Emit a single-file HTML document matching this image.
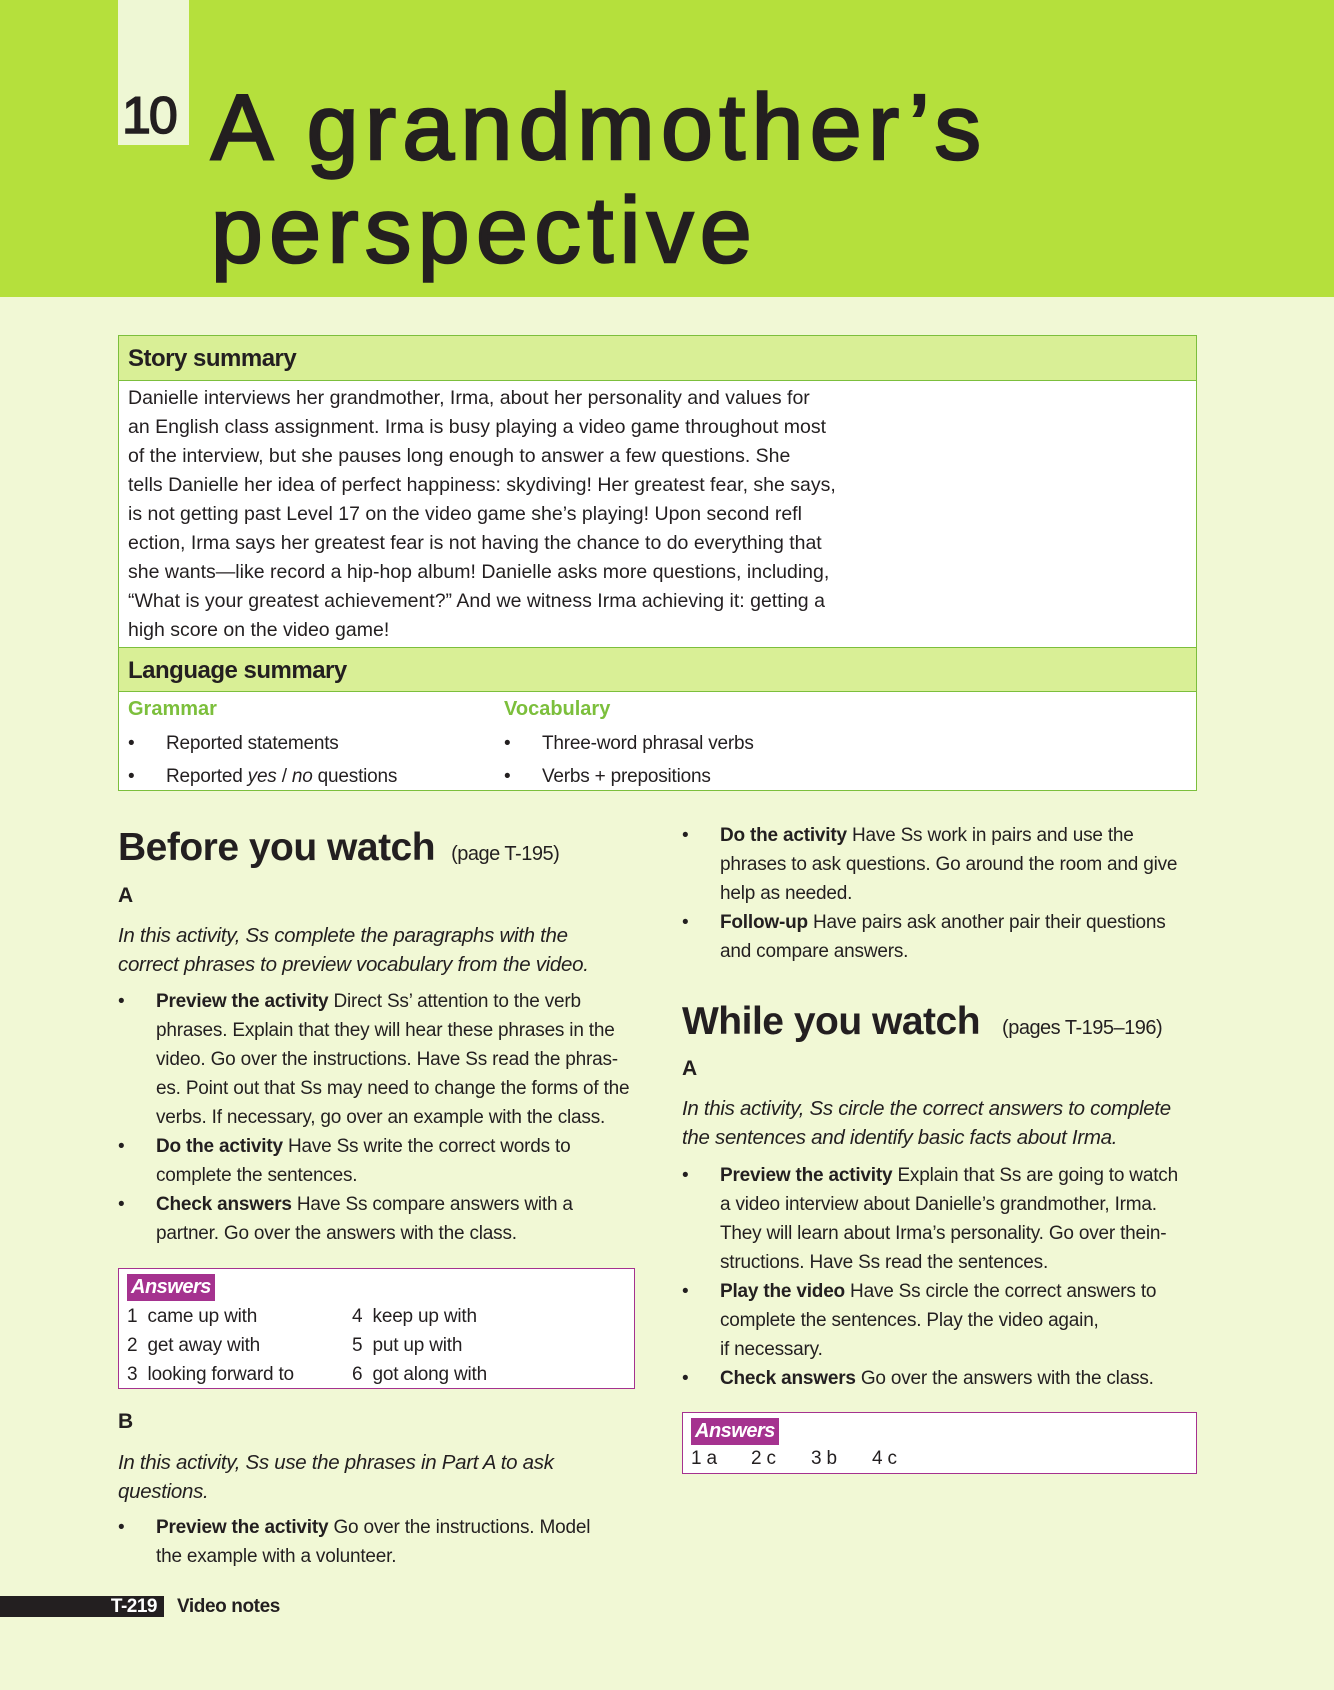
<!DOCTYPE html>
<html><head><meta charset="utf-8"><style>
*{margin:0;padding:0;box-sizing:border-box}
body{width:1334px;height:1690px;background:#f1f8d5;font-family:"Liberation Sans",sans-serif;color:#231f20;position:relative;overflow:hidden}
.hdr{position:absolute;left:0;top:0;width:1334px;height:297px;background:#b5e03c}
.num{position:absolute;left:118px;top:0;width:71px;height:145px;background:#eef7d4;font-size:52px;font-weight:normal;-webkit-text-stroke:1.5px #231f20;letter-spacing:-2px;padding:91px 0 0 4px;line-height:50px}
.title{position:absolute;left:211px;top:76px;font-size:93px;font-weight:normal;-webkit-text-stroke:2.5px #231f20;line-height:103px;letter-spacing:6.5px;white-space:nowrap}
.ab{position:absolute;white-space:nowrap}
.t{font-size:19.5px;line-height:29px;letter-spacing:0}
.tbl{position:absolute;left:118px;top:335px;width:1079px;height:456px;border:1px solid #7cbf3c;background:#fff}
.th{background:#d9ef96;height:45px;font-weight:bold;font-size:24px;padding:9px 9px;border-bottom:1px solid #7cbf3c;letter-spacing:-0.5px}
.g{color:#7cbf3c;font-weight:bold;font-size:20px}
h2{font-size:39px;font-weight:bold;letter-spacing:-0.5px}
h2 small{font-size:20px;font-weight:normal;margin-left:16px}
.A{font-weight:bold;font-size:21px}
i{font-style:italic}
.it{font-style:italic;font-size:20.5px;line-height:29px;letter-spacing:-0.3px}
.ul{font-size:19px;line-height:29px;letter-spacing:-0.2px}
.li{position:relative;padding-left:38px}
.li:before{content:"•";position:absolute;left:0;top:0}
.ans{position:absolute;border:1px solid #a5328f;background:#fff}
.lab{display:inline-block;background:#a5328f;color:#fff;font-weight:bold;font-style:italic;font-size:20px;padding:0 4px;line-height:27px;letter-spacing:-0.5px}
</style></head><body>
<div class="hdr"></div>
<div class="num">10</div>
<div class="title">A grandmother’s<br>perspective</div>

<div class="tbl">
<div class="th">Story summary</div>
<div class="t" style="padding:3px 9px;height:266px">Danielle interviews her grandmother, Irma, about her personality and values for<br>an English class assignment. Irma is busy playing a video game throughout most<br>of the interview, but she pauses long enough to answer a few questions. She<br>tells Danielle her idea of perfect happiness: skydiving! Her greatest fear, she says,<br>is not getting past Level 17 on the video game she’s playing! Upon second refl<br>ection, Irma says her greatest fear is not having the chance to do everything that<br>she wants—like record a hip-hop album! Danielle asks more questions, including,<br>“What is your greatest achievement?” And we witness Irma achieving it: getting a<br>high score on the video game!</div>
<div class="th" style="border-top:1px solid #7cbf3c">Language summary</div>
<div class="ab" style="left:9px;top:362px"><div class="g">Grammar</div><div class="ul" style="margin-top:8px"><div class="li">Reported statements</div><div class="li" style="margin-top:4px">Reported <i>yes</i> / <i>no</i> questions</div></div></div>
<div class="ab" style="left:385px;top:362px"><div class="g">Vocabulary</div><div class="ul" style="margin-top:8px"><div class="li">Three-word phrasal verbs</div><div class="li" style="margin-top:4px">Verbs + prepositions</div></div></div>
</div>

<div class="ab" style="left:118px;top:826px"><h2>Before you watch<small>(page T-195)</small></h2></div>
<div class="ab A" style="left:118px;top:884px">A</div>
<div class="ab it" style="left:118px;top:921px">In this activity, Ss complete the paragraphs with the<br>correct phrases to preview vocabulary from the video.</div>
<div class="ab ul" style="left:118px;top:987px">
<div class="li"><b>Preview the activity</b> Direct Ss’ attention to the verb<br>phrases. Explain that they will hear these phrases in the<br>video. Go over the instructions. Have Ss read the phras-<br>es. Point out that Ss may need to change the forms of the<br>verbs. If necessary, go over an example with the class.</div>
<div class="li"><b>Do the activity</b> Have Ss write the correct words to<br>complete the sentences.</div>
<div class="li"><b>Check answers</b> Have Ss compare answers with a<br>partner. Go over the answers with the class.</div>
</div>
<div class="ans" style="left:118px;top:1268px;width:517px;height:121px;padding:5px 8px">
<span class="lab">Answers</span>
<div class="ab ul" style="left:8px;top:33px">1 &nbsp;came up with<br>2 &nbsp;get away with<br>3 &nbsp;looking forward to</div>
<div class="ab ul" style="left:233px;top:33px">4 &nbsp;keep up with<br>5 &nbsp;put up with<br>6 &nbsp;got along with</div>
</div>
<div class="ab A" style="left:118px;top:1410px">B</div>
<div class="ab it" style="left:118px;top:1448px">In this activity, Ss use the phrases in Part A to ask<br>questions.</div>
<div class="ab ul" style="left:118px;top:1513px"><div class="li"><b>Preview the activity</b> Go over the instructions. Model<br>the example with a volunteer.</div></div>

<div class="ab ul" style="left:682px;top:821px">
<div class="li"><b>Do the activity</b> Have Ss work in pairs and use the<br>phrases to ask questions. Go around the room and give<br>help as needed.</div>
<div class="li"><b>Follow-up</b> Have pairs ask another pair their questions<br>and compare answers.</div>
</div>
<div class="ab" style="left:682px;top:1000px"><h2>While you watch<small style="margin-left:22px">(pages T-195–196)</small></h2></div>
<div class="ab A" style="left:682px;top:1057px">A</div>
<div class="ab it" style="left:682px;top:1094px">In this activity, Ss circle the correct answers to complete<br>the sentences and identify basic facts about Irma.</div>
<div class="ab ul" style="left:682px;top:1161px">
<div class="li"><b>Preview the activity</b> Explain that Ss are going to watch<br>a video interview about Danielle’s grandmother, Irma.<br>They will learn about Irma’s personality. Go over thein-<br>structions. Have Ss read the sentences.</div>
<div class="li"><b>Play the video</b> Have Ss circle the correct answers to<br>complete the sentences. Play the video again,<br>if necessary.</div>
<div class="li"><b>Check answers</b> Go over the answers with the class.</div>
</div>
<div class="ans" style="left:682px;top:1412px;width:515px;height:62px;padding:5px 8px">
<span class="lab">Answers</span>
<div class="ul" style="position:relative;height:26px;font-size:19px;line-height:28px">
<span class="ab" style="left:0">1 a</span><span class="ab" style="left:60px">2 c</span><span class="ab" style="left:120px">3 b</span><span class="ab" style="left:181px">4 c</span></div>
</div>

<div class="ab" style="left:0;top:1596px;width:164px;height:21px;background:#231f20;color:#fff;font-weight:bold;font-size:19px;line-height:21px;text-align:right;padding-right:7px;letter-spacing:-0.5px">T-219</div>
<div class="ab" style="left:177px;top:1596px;font-weight:bold;font-size:19px;line-height:21px;letter-spacing:-0.4px">Video notes</div>
</body></html>
